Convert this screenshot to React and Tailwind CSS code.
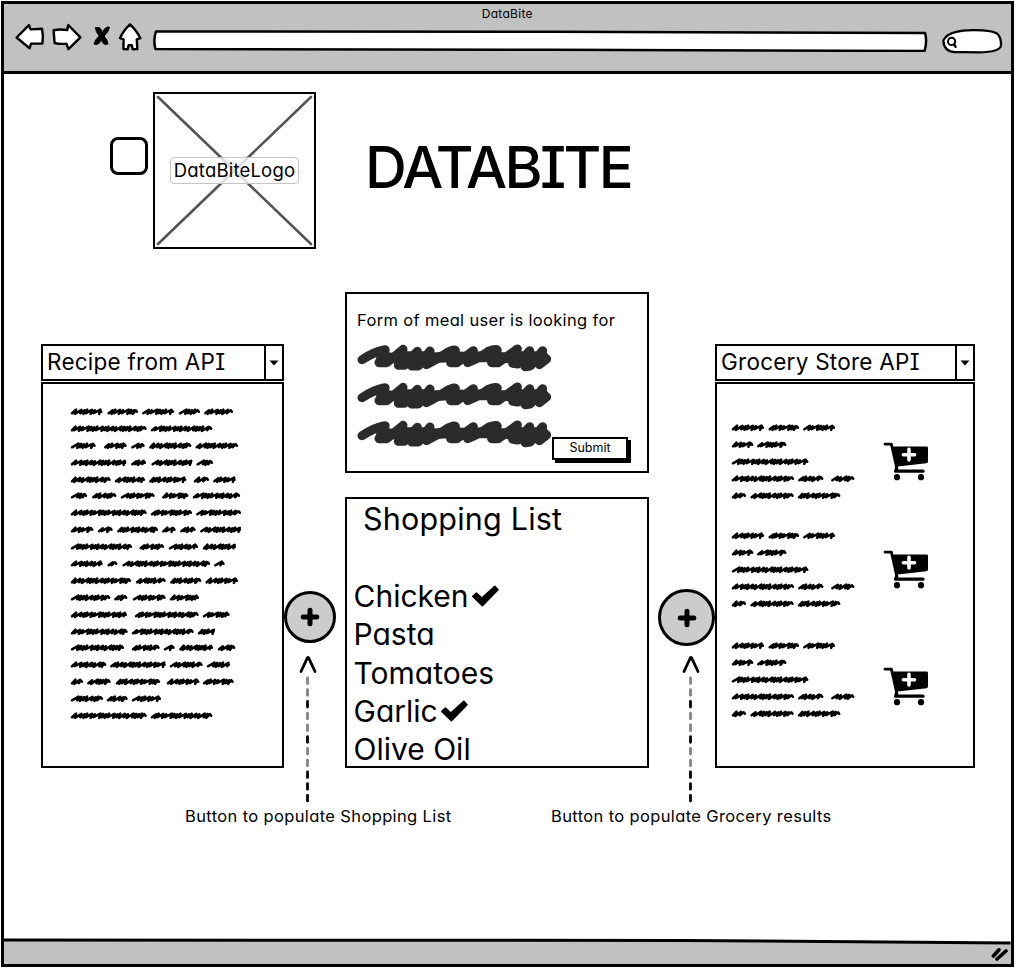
import React from "react";

const RECIPE_LINES = [
  [[122, 215], [232, 322], [336, 430], [446, 508], [522, 607]],
  [[122, 348], [362, 545]],
  [[122, 195], [222, 288], [303, 342], [357, 482], [496, 622]],
  [[122, 287], [303, 346], [364, 484], [499, 547]],
  [[122, 240], [254, 343], [357, 467], [491, 535], [549, 615]],
  [[122, 169], [186, 257], [272, 372], [396, 473], [488, 628]],
  [[122, 348], [362, 484], [498, 631]],
  [[122, 188], [203, 246], [261, 382], [396, 435], [450, 495], [510, 631]],
  [[122, 304], [328, 400], [416, 502], [518, 616]],
  [[122, 216], [232, 260], [277, 538], [552, 582]],
  [[122, 301], [317, 405], [420, 512], [526, 622]],
  [[122, 239], [252, 290], [308, 405], [419, 505]],
  [[122, 289], [314, 504], [518, 597]],
  [[122, 291], [305, 489], [503, 552]],
  [[122, 280], [305, 387], [401, 432], [447, 547], [563, 614]],
  [[122, 227], [240, 405], [419, 516], [530, 598]],
  [[122, 157], [171, 240], [257, 388], [410, 506], [518, 609]],
  [[122, 217], [230, 291], [305, 391]],
  [[122, 348], [362, 545]],
];

const STORE_LINES = [
  [[122, 217], [232, 322], [336, 430]],
  [[122, 185], [198, 284]],
  [[122, 350]],
  [[122, 307], [321, 395], [420, 488]],
  [[122, 163], [178, 306], [320, 446]],
];

// Slanted zigzag between two x positions; the pitch varies with a small fixed pattern.
function scribble(x0, x1, seed) {
  const pitches = [3.2, 5.4, 3.2, 2.6, 4.6, 3, 5.6, 2.6, 2.8];
  let x = x0 + 1;
  let d = `M${x} 6.3`;
  let i = seed;
  while (x < x1 - 6) {
    const p = pitches[i % 9];
    d += `L${(x + p + 0.9).toFixed(1)} ${(2.6 + (i % 3) * 0.3).toFixed(1)}L${(x + p - 0.4).toFixed(1)} ${(6.9 - (i % 2) * 0.7).toFixed(1)}`;
    x += p;
    i += 1;
  }
  return d + `L${(x1 - 2).toFixed(1)} 3.2L${(x1 - 0.8).toFixed(1)} 4.8`;
}

function ScribbleLines({ lines, width }) {
  return (
    <div className="flex flex-col">
      {lines.map((words, i) => (
        <svg key={i} width={width} height="16.9" className="block overflow-visible" fill="none" stroke="#000" strokeWidth="2.5" strokeLinecap="round" strokeLinejoin="round">
          {words.map(([a, b], j) => (
            <path key={j} d={scribble((a - 122) / 3, (b - 122) / 3, i * 3 + j * 2)} />
          ))}
        </svg>
      ))}
    </div>
  );
}

function Blob() {
  return (
    <svg width="196" height="38" viewBox="0 0 588 114" className="block overflow-visible" fill="none" stroke="#2b2b2b" strokeWidth="27" strokeLinecap="round" strokeLinejoin="round">
      <path d="M15 47Q50 24 80 18Q88 15 82 24L66 56L90 56L138 16L124 64L142 64L181 22L164 66L184 66L219 21L208 62Q240 46 270 26Q300 12 294 22L281 56L300 56L349 20L332 56Q370 40 394 22Q424 12 420 20L404 56L424 56L481 15L467 58L482 60L518 20L504 68L520 66L557 20L547 62L569 45" />
      <path d="M74 38L104 42L130 42L214 42L250 40L290 38L336 40L376 38L420 40L474 42L560 42" strokeWidth="32" />
      <path d="M130 44H212M474 44H556" strokeWidth="44" />
    </svg>
  );
}

function Arrow() {
  const dashes = [0, 0, 1, 0, 0, 1, 0, 0, 1, 1, 1];
  return (
    <svg width="18" height="148" className="block overflow-visible" fill="none" strokeLinecap="round">
      <path d="M2 15.5L8.5 1.6Q9 1 9.5 1.6L16 15.5" stroke="#000" strokeWidth="2.8" strokeLinejoin="round" />
      {dashes.map((on, i) => (
        <path key={i} d={`M8.5 ${22 + i * 11.73}v5.6`} stroke={on ? "#000" : "#85808a"} strokeWidth="2.8" />
      ))}
    </svg>
  );
}

function Plus() {
  return (
    <svg width="20" height="20" stroke="#000" strokeWidth="5" strokeLinecap="round">
      <path d="M10 3.2V16.8M3.2 10H16.8" />
    </svg>
  );
}

function Check() {
  return (
    <svg width="28" height="24" viewBox="0 0 28 24" className="block overflow-visible" fill="#000" stroke="#000" strokeWidth="1.6" strokeLinejoin="round">
      <path d="M0.8 12.4L4.4 9L9.8 14L22.8 2.4L26 5.8L10.4 21.6Z" />
    </svg>
  );
}

function Cart() {
  return (
    <svg width="46" height="40" viewBox="0 0 46 40" className="block">
      <path d="M2 2.2H8.4L14 27" fill="none" stroke="#000" strokeWidth="2.8" strokeLinecap="round" strokeLinejoin="round" />
      <path d="M9 4.6H43.5Q45 4.6 45 6V19.6Q45 21 43.5 21.2L14.6 24.6Z" fill="#000" />
      <path d="M13.6 24L12.6 29" stroke="#000" strokeWidth="2.6" />
      <path d="M12.6 29.2H40" stroke="#000" strokeWidth="3.2" strokeLinecap="round" />
      <circle cx="14" cy="35.2" r="3.1" />
      <circle cx="38" cy="35.2" r="3.1" />
      <path d="M26 7.4V18M20.4 12.7H31.6" stroke="#fff" strokeWidth="3.6" strokeLinecap="round" />
    </svg>
  );
}

function Select({ label, width }) {
  return (
    <div className={`flex h-[37px] border-2 border-black bg-white ${width}`}>
      <div className="flex-1 pt-[2.5px] pl-[4px] text-[22.5px] leading-[26px] tracking-[0.25px] whitespace-nowrap">{label}</div>
      <div className="flex w-[18px] items-center justify-center border-l-2 border-black">
        <svg width="10" height="6"><path d="M0.5 0.5H9.5L5 5.5Z" /></svg>
      </div>
    </div>
  );
}

const ITEMS = [["Chicken", true], ["Pasta", false], ["Tomatoes", false], ["Garlic", true], ["Olive Oil", false]];

export default function App() {
  return (
    <div className="h-[968px] w-[1015px] overflow-hidden bg-white p-px pr-[1.5px] font-['Inter','Noto_Sans',sans-serif] text-black [font-feature-settings:'cv08','cv11']">
      <div className="flex h-[966px] flex-col border-[3px] border-black">
        <header className="h-[70px] shrink-0 border-b-[3px] border-black bg-[#c1c1c1]">
          <div className="h-[20px] pt-[2px] text-center text-[12px] leading-[16px] tracking-[0.3px]">DataBite</div>
          <div className="flex">
            <svg width="140" height="30" viewBox="12 22 140 30" className="-mt-[2px] ml-[8px] block shrink-0" fill="#fff" stroke="#000" strokeWidth="2.4" strokeLinejoin="round">
              <path d="M16.6 37.5L29 25.2L30.6 29.4L42 28.8Q43.6 36 42.4 43.6H31L29.6 48.2Z" />
              <path d="M53.6 30.2Q60 29 67.3 30L68.2 25L80.4 37.4L68.4 49.2L66.4 43.6Q60 44.4 54.6 43Z" />
              <path d="M130 24.3Q137 31 140.4 38.2L136.8 39.4L137.3 49L132.7 49.2L131.8 45.2H128.6L127.6 49.4L123.4 49L123.6 39.4L120 38.2Q123 31 130 24.3Z" />
              <path d="M95.4 27.6Q101 26 102.4 33Q105 26 109.6 27.2Q108 33 104 36Q107.6 40 108 44Q103 46 101.6 39.8Q98.4 46 94 44Q95.2 39.4 99.2 36Q95.6 32 95.4 27.6Z" fill="#000" strokeWidth="1" />
            </svg>
            <svg width="776" height="24" className="mt-[4px] block shrink-0" fill="#fff" stroke="#000" strokeWidth="2.5" strokeLinejoin="round">
              <path d="M4 3.4L400 3.8L773 5Q775.4 13 772.6 23L400 21.8L3.4 21Q1 12 4 3.4Z" />
            </svg>
            <svg width="62" height="26" className="mt-[4px] ml-[13px] block shrink-0" fill="#fff" stroke="#000" strokeWidth="2.3">
              <path d="M4 10Q10 2.4 32 2.2Q50 2 56 5.6Q60.4 9 60 18Q58 24 38 24.4Q28 24 14 24.2Q3 23.6 2.4 13Q2.4 11.6 4 10Z" />
              <circle cx="10.6" cy="13.4" r="3.6" strokeWidth="2" />
              <path d="M13 16.2L14.6 18.8" strokeWidth="2.4" strokeLinecap="round" />
            </svg>
          </div>
        </header>

        <main className="flex-1">
          <div className="flex h-[218px] items-start">
            <div className="mt-[63px] ml-[106px] size-[38px] rounded-[8px] border-[3px] border-black" />
            <div className="relative mt-[18px] ml-[5px] flex h-[157px] w-[163px] items-center justify-center border-2 border-black">
              <svg className="absolute inset-0 h-full w-full" viewBox="0 0 159 153" preserveAspectRatio="none" stroke="#555" strokeWidth="2.6" strokeLinecap="round">
                <path d="M3 3L156 150M156 3L3 150" />
              </svg>
              <div className="relative flex h-[27px] w-[129px] items-center justify-center rounded-[4px] border border-[#c4c4c4] bg-white/80 text-[18.5px] leading-none tracking-[0.2px] whitespace-nowrap">DataBiteLogo</div>
            </div>
            <h1 className="mt-[63px] ml-[49px] text-[58px] leading-[60px] font-medium tracking-[-2.6px] whitespace-nowrap">DATABITE</h1>
          </div>

          <div className="flex h-[512px] items-start pl-[37px]">
            <section className="w-[243px] pt-[52px]">
              <Select label="Recipe from API" width="w-[243px]" />
              <div className="mt-px h-[386px] w-[243px] border-2 border-black pt-[23px] pl-[27.5px]">
                <ScribbleLines lines={RECIPE_LINES} width="180" />
              </div>
            </section>
            <div className="flex w-[61px] flex-col items-start pt-[299px]">
              <button className="flex size-[52px] items-center justify-center rounded-full border-[3px] border-black bg-[#ccc]"><Plus /></button>
              <div className="mt-[13px] pl-[15px]"><Arrow /></div>
            </div>
            <div className="w-[304px]">
              <section className="h-[181px] border-2 border-black pl-[10px]">
                <p className="mt-[15px] text-[16.5px] leading-[22px] tracking-[0.34px] whitespace-nowrap">Form of meal user is looking for</p>
                <div className="mt-[13px] h-[88px]"><Blob /><Blob /><Blob /></div>
                <button className="relative mt-[5px] ml-[195px] flex h-[23px] w-[76px] items-center justify-center border-2 border-black bg-white text-[12.5px] leading-none shadow-[3px_3px_0_#000]">Submit</button>
              </section>
              <section className="mt-[24px] h-[271px] border-2 border-black pl-[6.5px]">
                <h2 className="pt-px pl-[9.5px] text-[30.5px] leading-[38px] tracking-[0.2px] whitespace-nowrap">Shopping List</h2>
                <ul className="mt-[39px]">
                  {ITEMS.map(([name, done]) => (
                    <li key={name} className="flex h-[38.3px] items-center gap-[3px] text-[30px] leading-[38px] whitespace-nowrap">
                      <span>{name}</span>
                      {done && <Check />}
                    </li>
                  ))}
                </ul>
              </section>
            </div>
            <div className="flex w-[66px] flex-col items-start pt-[297px] pl-[9px]">
              <button className="flex size-[57px] shrink-0 items-center justify-center rounded-full border-[3px] border-black bg-[#ccc]"><Plus /></button>
              <div className="mt-[10px] pl-[24px]"><Arrow /></div>
            </div>
            <section className="w-[260px] pt-[52px]">
              <Select label="Grocery Store API" width="w-[260px]" />
              <div className="mt-px h-[386px] w-[260px] border-2 border-black pt-[39px] pl-[15px]">
                {[0, 1, 2].map((i) => (
                  <div key={i} className={`flex ${i === 0 ? "h-[108px]" : "h-[110px]"}`}>
                    <div className="w-[151px]"><ScribbleLines lines={STORE_LINES} width="130" /></div>
                    <div className={i === 2 ? "pt-[26px]" : "pt-[19px]"}><Cart /></div>
                  </div>
                ))}
              </div>
            </section>
          </div>
          <div className="flex pl-[181px] text-[16.5px] leading-[24px] tracking-[0.37px] whitespace-nowrap">
            <p className="w-[366px]">Button to populate Shopping List</p>
            <p>Button to populate Grocery results</p>
          </div>
        </main>

        <footer className="relative h-[23px] shrink-0 bg-[#c1c1c1]">
          <svg className="absolute top-[-3px] left-0 h-[7px] w-full" viewBox="0 0 1006 7" preserveAspectRatio="none">
            <path d="M0 0H1006V5L680 1.5L0 1Z" fill="#fff" />
            <path d="M0 2L680 2.5L1006 5" fill="none" stroke="#000" strokeWidth="3" />
          </svg>
          <svg width="18" height="14" className="absolute top-[6px] right-[2px]" stroke="#000" strokeWidth="3.6" strokeLinecap="round">
            <path d="M2.4 9L8 2.8M6 12L15 4" />
          </svg>
        </footer>
      </div>
    </div>
  );
}
